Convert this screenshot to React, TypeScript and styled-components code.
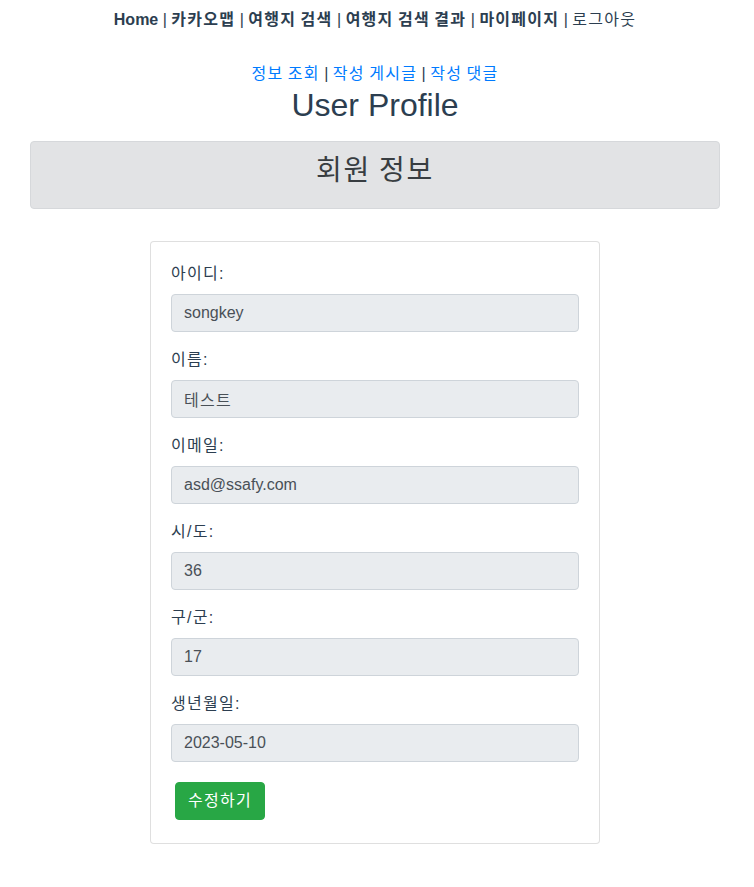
import React from "react";
import styled, { createGlobalStyle, css } from "styled-components";

const GlobalStyle = createGlobalStyle`
  html, body { margin: 0; padding: 0; background: #fff; }
  body {
    font-family: "Liberation Sans", Arial, "Noto Sans CJK KR", sans-serif;
    font-size: 16px;
    line-height: 1.5;
    color: #212529;
  }
  * { box-sizing: border-box; }
`;

/* Korean glyphs in the reference are full-width (1em); widen them slightly */
const koSpacing = css`
  letter-spacing: 1.25px;
  word-spacing: -1.25px;
`;

const Page = styled.div`
  text-align: center;
  color: #2c3e50;
  padding: 8px 34px 40px 30px;
`;

const Nav = styled.nav`
  line-height: 24px;
  font-size: 16px;
  color: #2c3e50;
`;

const NavLink = styled.a<{ $bold?: boolean; $ko?: boolean }>`
  color: #2c3e50;
  font-weight: ${(p) => (p.$bold ? "bold" : "normal")};
  text-decoration: none;
  ${(p) => p.$ko && koSpacing}
`;

const SubNav = styled.div`
  margin-top: 30px;
  line-height: 24px;
  color: #2c3e50;
`;

const SubLink = styled.a`
  color: #007bff;
  text-decoration: none;
  ${koSpacing}
`;

const Title = styled.h2`
  margin: 0;
  font-size: 32px;
  font-weight: 500;
  line-height: 38px;
  color: #2c3e50;
`;

const Banner = styled.div`
  margin-top: 17px;
  background: #e2e3e5;
  border: 1px solid #d6d8db;
  border-radius: 4px;
  padding: 12px 20px;
  color: #383d41;
`;

const BannerTitle = styled.h3`
  margin: 0 0 8px;
  font-size: 28px;
  font-weight: 400;
  line-height: 33.6px;
  letter-spacing: 1.75px;
  word-spacing: -1.75px;
`;

const Card = styled.div`
  width: 450px;
  margin: 32px auto 0;
  border: 1px solid rgba(0, 0, 0, 0.125);
  border-radius: 4px;
  background: #fff;
  padding: 20px 20px 19px;
  text-align: left;
`;

const Group = styled.div`
  margin-bottom: 16px;
`;

const Label = styled.label`
  display: block;
  margin-bottom: 8px;
  line-height: 24px;
  color: #2c3e50;
  ${koSpacing}
`;

const Input = styled.input<{ $ko?: boolean }>`
  display: block;
  width: 100%;
  height: 38px;
  padding: 6px 12px;
  font-size: 16px;
  font-family: inherit;
  line-height: 1.5;
  color: #495057;
  background: #e9ecef;
  border: 1px solid #ced4da;
  border-radius: 4px;
  outline: none;
  ${(p) => p.$ko && koSpacing}
`;

const Button = styled.button`
  margin: 4px;
  height: 38px;
  padding: 6px 12px;
  font-size: 16px;
  font-family: inherit;
  line-height: 1.5;
  color: #fff;
  background: #28a745;
  border: 1px solid #28a745;
  border-radius: 4px;
  cursor: pointer;
  ${koSpacing}
`;

const fields = [
  { label: "아이디:", value: "songkey", ko: false },
  { label: "이름:", value: "테스트", ko: true },
  { label: "이메일:", value: "asd@ssafy.com", ko: false },
  { label: "시/도:", value: "36", ko: false },
  { label: "구/군:", value: "17", ko: false },
  { label: "생년월일:", value: "2023-05-10", ko: false },
];

export default function App() {
  return (
    <>
      <GlobalStyle />
      <Page>
        <Nav>
          <NavLink $bold href="#">Home</NavLink> |{" "}
          <NavLink $bold $ko href="#">카카오맵</NavLink> |{" "}
          <NavLink $bold $ko href="#">여행지 검색</NavLink> |{" "}
          <NavLink $bold $ko href="#">여행지 검색 결과</NavLink> |{" "}
          <NavLink $bold $ko href="#">마이페이지</NavLink> |{" "}
          <NavLink $ko href="#">로그아웃</NavLink>
        </Nav>
        <SubNav>
          <SubLink href="#">정보 조회</SubLink> | <SubLink href="#">작성 게시글</SubLink> |{" "}
          <SubLink href="#">작성 댓글</SubLink>
        </SubNav>
        <Title>User Profile</Title>
        <Banner>
          <BannerTitle>회원 정보</BannerTitle>
        </Banner>
        <Card>
          {fields.map((f) => (
            <Group key={f.label}>
              <Label>{f.label}</Label>
              <Input readOnly value={f.value} $ko={f.ko} />
            </Group>
          ))}
          <Button>수정하기</Button>
        </Card>
      </Page>
    </>
  );
}
